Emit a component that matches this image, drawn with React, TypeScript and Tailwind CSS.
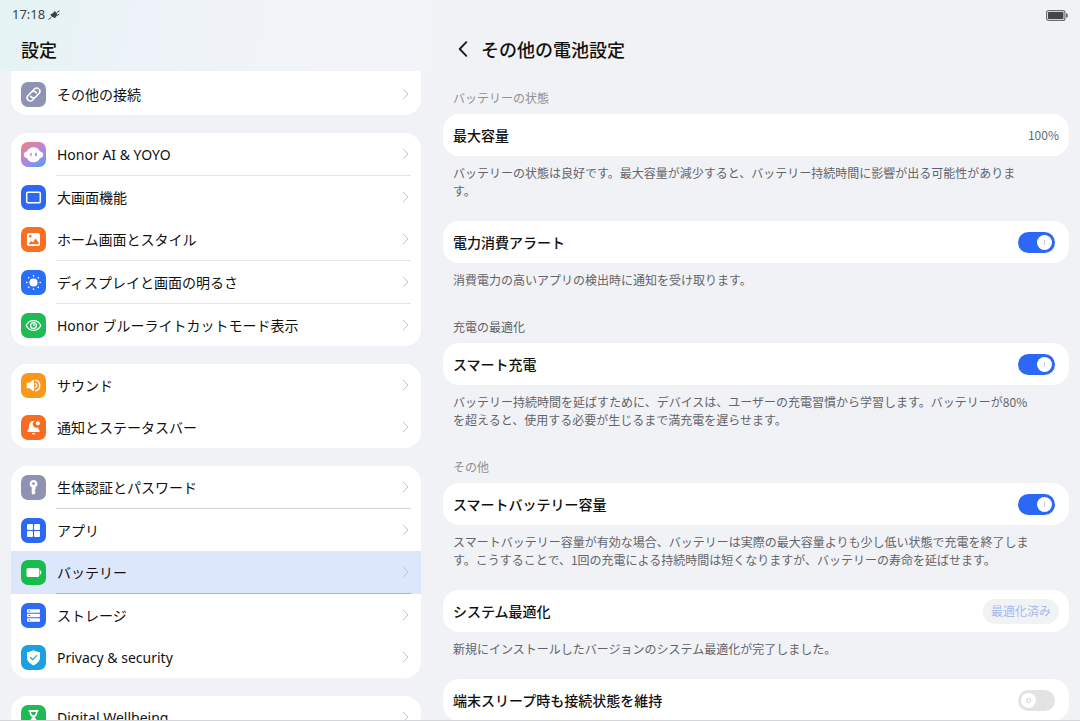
import { useId, useState } from "react";
import type { ReactNode } from "react";

const JP = "font-['Noto_Sans_CJK_JP','Liberation_Sans',sans-serif]";
const LATIN = "font-['Noto_Sans','Noto_Sans_CJK_JP',sans-serif]";

type IconName =
  | "link" | "yoyo" | "screen" | "picture" | "sun" | "eye" | "sound"
  | "bell" | "key" | "apps" | "battery" | "storage" | "shield" | "hourglass";

const glyphs: Record<IconName, ReactNode> = {
  link: (
    <g transform="rotate(-45 12.5 12.5)" fill="none" stroke="#fff" strokeWidth="1.5" strokeLinecap="round">
      <path d="M11.400 15.700H8a3.200 3.200 0 0 1 0-6.400h4.800a3.200 3.200 0 0 1 2.900 4.200" />
      <path d="M13.600 9.300H17a3.200 3.200 0 0 1 0 6.400h-4.800a3.200 3.200 0 0 1-2.900-4.200" />
    </g>
  ),
  yoyo: (
    <g>
      <path d="M12.5 5.3c3.2 0 5.5 1.7 6.4 4.3 2 .2 3.3 1.2 3.3 3.1s-1.300 3-3.200 3.200c-1 2.700-3.300 4.300-6.500 4.300s-5.500-1.600-6.500-4.300c-1.900-.2-3.200-1.300-3.200-3.200s1.300-2.900 3.300-3.100c.9-2.600 3.200-4.300 6.400-4.300z" fill="#fff" />
      <rect x="9.200" y="10.800" width="1.600" height="3.600" rx=".8" fill="#e58bb5" />
      <rect x="14.200" y="10.800" width="1.600" height="3.600" rx=".8" fill="#8f8be8" />
    </g>
  ),
  screen: <rect x="5.700" y="7.200" width="13.600" height="10.600" rx="1.200" fill="none" stroke="#fff" strokeWidth="1.500" />,
  picture: (
    <g>
      <rect x="6" y="6" width="13" height="13" rx="1.800" fill="#fff" />
      <circle cx="9.300" cy="9.300" r="1.300" fill="#f56f24" />
      <path d="M7.300 17.300l2.900-3.400 1.500 1.500 3-3.800 3 4.200v1.500z" fill="#f56f24" />
    </g>
  ),
  sun: (
    <g fill="#fff" stroke="#fff" strokeWidth="1.600" strokeLinecap="round">
      <circle cx="12.500" cy="12.500" r="3.300" />
      <path d="M12.500 5.700v.2M12.500 19.100v.2M5.700 12.500h.2M19.100 12.500h.2M7.700 7.700l.1.1M17.200 17.200l.1.1M7.700 17.300l.1-.1M17.200 7.800l.1-.1" />
    </g>
  ),
  eye: (
    <g fill="none" stroke="#fff" strokeWidth="1.300">
      <path d="M5.200 12.500c1.500-3.100 4.200-4.800 7.300-4.800s5.800 1.700 7.300 4.800c-1.500 3.100-4.200 4.800-7.300 4.800s-5.800-1.700-7.300-4.800z" />
      <circle cx="12.500" cy="12.500" r="2.900" />
      <circle cx="12.800" cy="12" r="1" fill="#fff" stroke="none" />
    </g>
  ),
  sound: (
    <g>
      <path d="M5.800 9.800h2.700l3.700-2.900c.5-.3.900-.1.900.5v10.200c0 .6-.4.8-.9.500l-3.700-2.900H6.600a.8.800 0 0 1-.8-.8z" fill="#fff" />
      <path d="M14.600 10.600a2.200 2.200 0 0 1 0 3.800M14.600 7.100a5.600 5.600 0 0 1 0 10.800" fill="none" stroke="#fff" strokeWidth="1.400" strokeLinecap="round" />
    </g>
  ),
  bell: (
    <g fill="#fff">
      <path d="M13.600 6a4.800 4.800 0 0 0-5.700 4.700v2.800l-1.600 2.200c-.4.600-.1 1.200.6 1.200h11.200c.7 0 1-.6.600-1.200l-1.600-2.200v-1.300a3.400 3.400 0 0 1-3.500-6.200z" />
      <circle cx="16.900" cy="8.300" r="2" />
      <path d="M10.800 17.900h3.400a1.700 1.500 0 0 1-3.400 0z" />
    </g>
  ),
  key: (
    <g>
      <path d="M12.500 5a3.900 3.900 0 0 0-1.800 7.300v6.200l1.400 1.300 2.300-1.500v-1.200l-.9-1 .9-1v-2.800A3.900 3.900 0 0 0 12.500 5z" fill="#fff" />
      <circle cx="12.500" cy="8.600" r="1.300" fill="#8f93b3" />
    </g>
  ),
  apps: (
    <g fill="#fff">
      <rect x="6" y="6" width="6" height="6" rx="1" />
      <rect x="13" y="6" width="6" height="6" rx="1" />
      <rect x="6" y="13" width="6" height="6" rx="1" />
      <rect x="13" y="13" width="6" height="6" rx="1" />
    </g>
  ),
  battery: (
    <g fill="#fff">
      <rect x="5.500" y="8" width="12.800" height="9" rx="1.600" />
      <rect x="19" y="10.600" width="1.200" height="3.800" rx=".6" />
    </g>
  ),
  storage: (
    <g>
      <g fill="#fff">
        <rect x="6" y="6.200" width="13" height="3.600" rx=".8" />
        <rect x="6" y="10.700" width="13" height="3.600" rx=".8" />
        <rect x="6" y="15.200" width="13" height="3.600" rx=".8" />
      </g>
      <path d="M7.600 8h1.600M7.600 12.500h1.600M7.600 17h1.600" stroke="#2f6bf2" strokeWidth="1" />
    </g>
  ),
  shield: (
    <g>
      <path d="M12.500 5c2 1.400 4 2 6.500 2.100v5.300c0 3.500-2.500 6-6.500 7.900-4-1.900-6.500-4.400-6.500-7.900V7.100C8.500 7 10.500 6.400 12.500 5z" fill="#fff" />
      <path d="M9.500 12.500l2.300 2.200 3.900-4" fill="none" stroke="#1ba1e2" strokeWidth="1.200" strokeLinecap="round" strokeLinejoin="round" />
    </g>
  ),
  hourglass: (
    <g fill="#fff">
      <path d="M7.500 5h10v1.500h-1c0 3-1.200 4.700-3 6 1.800 1.300 3 3 3 6h1V20h-10v-1.500h1c0-3 1.200-4.700 3-6-1.800-1.300-3-3-3-6h-1z" />
      <path d="M10 7h5c-.2 1.500-.8 2.500-1.500 3h-2c-.7-.5-1.300-1.500-1.500-3z" fill="#1fb955" />
    </g>
  ),
};

function AppIcon({ name, tile }: { name: IconName; tile: string }) {
  return (
    <span className={`size-[25px] shrink-0 overflow-hidden rounded-[7px] ${tile}`}>
      <svg viewBox="0 0 25 25" className="size-full" aria-hidden="true">{glyphs[name]}</svg>
    </span>
  );
}

type Item = { label: string; icon: IconName; tile: string; divider?: string };

const SOFT = "bg-[#e4e5e8]";

const groups: Item[][] = [
  [{ label: "その他の接続", icon: "link", tile: "bg-[#8f93b3]" }],
  [
    { label: "Honor AI & YOYO", icon: "yoyo", tile: "bg-linear-150 from-[#ef7f78] via-[#b884dc] to-[#2f9bfb]", divider: SOFT },
    { label: "大画面機能", icon: "screen", tile: "bg-[#2a68f5]" },
    { label: "ホーム画面とスタイル", icon: "picture", tile: "bg-[#f56f24]", divider: SOFT },
    { label: "ディスプレイと画面の明るさ", icon: "sun", tile: "bg-[#2a6ff8]", divider: SOFT },
    { label: "Honor ブルーライトカットモード表示", icon: "eye", tile: "bg-[#1fbb55]" },
  ],
  [
    { label: "サウンド", icon: "sound", tile: "bg-[#fa981e]" },
    { label: "通知とステータスバー", icon: "bell", tile: "bg-[#f56c22]" },
  ],
  [
    { label: "生体認証とパスワード", icon: "key", tile: "bg-[#8f93b3]", divider: "bg-[#cfd0d3]" },
    { label: "アプリ", icon: "apps", tile: "bg-[#2a68f5]" },
    { label: "バッテリー", icon: "battery", tile: "bg-[#16bd4b]", divider: "bg-[#aab6d2]" },
    { label: "ストレージ", icon: "storage", tile: "bg-[#2f6bf2]" },
    { label: "Privacy & security", icon: "shield", tile: "bg-[#1ba1e2]" },
  ],
  [{ label: "Digital Wellbeing", icon: "hourglass", tile: "bg-[#1fb955]" }],
];

function NavRow({ item, selected, onSelect }: { item: Item; selected: boolean; onSelect: () => void }) {
  return (
    <li className={selected ? "bg-[#dde7fc]" : ""}>
      <button
        type="button"
        onClick={onSelect}
        aria-current={selected ? "page" : undefined}
        className="flex h-[42px] w-full items-center gap-[11px] pr-3 pl-[10px] text-left"
      >
        <AppIcon name={item.icon} tile={item.tile} />
        <span className={`flex-1 truncate pt-[2px] text-sm text-[#111] ${LATIN}`}>{item.label}</span>
        <svg viewBox="0 0 7 12" className="h-3 w-[7px]" fill="none" stroke="#c3c4c8" aria-hidden="true">
          <path d="M1 .8L6 6l-5 5.200" />
        </svg>
      </button>
      {item.divider && <div className={`mr-[10px] ml-[45px] h-px ${item.divider}`} />}
    </li>
  );
}

function Card({ children }: { children: ReactNode }) {
  return <div className="flex h-[42px] items-center justify-between rounded-2xl bg-white px-[10px]">{children}</div>;
}

function Label({ children }: { children: ReactNode }) {
  return <span className="text-sm font-medium text-[#111]">{children}</span>;
}

function Note({ lines }: { lines: string[] }) {
  return (
    <p className="px-[10px] pt-2 text-xs leading-[18px] text-[#62646a]">
      {lines.map((line) => (
        <span key={line} className="block">{line}</span>
      ))}
    </p>
  );
}

function Heading({ children, tone = "text-[#8e9096]" }: { children: ReactNode; tone?: string }) {
  return <h2 className={`px-[10px] pb-[7px] text-xs leading-[18px] ${tone}`}>{children}</h2>;
}

function SwitchCard({ label, initial }: { label: string; initial: boolean }) {
  const id = useId();
  const [on, setOn] = useState(initial);
  return (
    <Card>
      <label htmlFor={id} className="text-sm font-medium text-[#111]">{label}</label>
      <span className="relative mr-1 flex">
        <input
          id={id}
          type="checkbox"
          role="switch"
          checked={on}
          onChange={() => setOn(!on)}
          className="h-[21px] w-[37px] appearance-none rounded-full bg-[#e3e3e4] checked:bg-[#2a68f5]"
        />
        <span className={`pointer-events-none absolute top-[3px] flex size-[15px] items-center justify-center rounded-full bg-white ${on ? "right-[3px]" : "left-[3px]"}`}>
          <span className={on ? "h-[5px] w-px bg-[#c9cad6]" : "size-[5px] rounded-full border border-[#cfcfd1]"} />
        </span>
      </span>
    </Card>
  );
}

export default function App() {
  const [selected, setSelected] = useState("バッテリー");
  return (
    <div className={`flex h-screen overflow-hidden border-b border-[#d5d6da] bg-[#f1f2f6] ${JP}`}>
      <aside className="flex w-2/5 flex-col">
        <header className="h-[71px] shrink-0 bg-linear-100 from-[#e4f3f4] via-[#eef3f9] via-35% to-[#f3f4f8]">
          <div className="flex h-[30px] items-center gap-[3px] pl-3 text-[#3c4145]">
            <time className="font-['Noto_Sans',sans-serif] text-[13px]">17:18</time>
            <svg viewBox="0 0 12 10" className="h-[10px] w-3" fill="currentColor" aria-hidden="true">
              <path d="M2.300 4.600l2.600-1.400L6.700.9l1.500 1.500c1.200.7 1.300 2.400.4 3.500L6.900 8.200 5.300 7.300l-1.600-.6z" />
              <path d="M.8 9.300l2-1.600M9.200 2.200l2-1.200M9.400 5.400l1.600-1.100" fill="none" stroke="currentColor" strokeLinecap="round" />
            </svg>
          </div>
          <h1 className="flex h-[38px] items-center pl-[21px] text-lg font-medium text-[#111]">設定</h1>
        </header>
        <nav aria-label="設定" className="flex-1 overflow-y-auto px-[11px] [scrollbar-width:none]">
          <div className="flex flex-col gap-[18px]">
            {groups.map((group, i) => (
              <ul key={group[0].label} className={`shrink-0 overflow-hidden bg-white ${i === 0 ? "rounded-b-2xl pt-[2px]" : "rounded-2xl"}`}>
                {group.map((item) => (
                  <NavRow key={item.label} item={item} selected={item.label === selected} onSelect={() => setSelected(item.label)} />
                ))}
              </ul>
            ))}
          </div>
        </nav>
      </aside>

      <main className="flex flex-1 flex-col">
        <div className="flex h-[30px] shrink-0 items-center justify-end pr-3">
          <svg viewBox="0 0 22 11" className="h-[11px] w-[22px]" role="img" aria-label="電池">
            <rect x=".6" y=".6" width="18.300" height="9.800" rx="2" fill="none" stroke="#6b6d70" strokeWidth="1.200" />
            <rect x="2" y="2" width="15.500" height="7" rx=".8" fill="#444648" />
            <path d="M20 3.600h.8a1 1 0 0 1 1 1v1.800a1 1 0 0 1-1 1H20z" fill="#6b6d70" />
          </svg>
        </div>
        <div className="flex h-[38px] shrink-0 items-center gap-[11px] pl-6">
          <button type="button" aria-label="戻る" className="flex w-[14px] justify-center">
            <svg viewBox="0 0 10 16" className="h-4 w-[10px]" fill="none" stroke="#1b1c1e" strokeWidth="1.900" strokeLinecap="round" strokeLinejoin="round">
              <path d="M8.300 1.200L1.700 8l6.600 6.800" />
            </svg>
          </button>
          <h1 className="text-lg font-medium text-[#111]">その他の電池設定</h1>
        </div>
        <div className="flex flex-1 flex-col gap-[29px] overflow-y-auto px-[11px] pt-[21px] [scrollbar-width:none]">
          <section className="flex flex-col gap-[21px]">
            <div>
              <Heading>バッテリーの状態</Heading>
              <Card>
                <Label>最大容量</Label>
                <span className="text-xs text-[#65676c]">100%</span>
              </Card>
              <Note lines={["バッテリーの状態は良好です。最大容量が減少すると、バッテリー持続時間に影響が出る可能性がありま", "す。"]} />
            </div>
            <div>
              <SwitchCard label="電力消費アラート" initial />
              <Note lines={["消費電力の高いアプリの検出時に通知を受け取ります。"]} />
            </div>
          </section>
          <section>
            <Heading tone="text-[#5f6166]">充電の最適化</Heading>
            <SwitchCard label="スマート充電" initial />
            <Note lines={["バッテリー持続時間を延ばすために、デバイスは、ユーザーの充電習慣から学習します。バッテリーが80%", "を超えると、使用する必要が生じるまで満充電を遅らせます。"]} />
          </section>
          <section className="flex flex-col gap-[21px]">
            <div>
              <Heading>その他</Heading>
              <SwitchCard label="スマートバッテリー容量" initial />
              <Note lines={["スマートバッテリー容量が有効な場合、バッテリーは実際の最大容量よりも少し低い状態で充電を終了しま", "す。こうすることで、1回の充電による持続時間は短くなりますが、バッテリーの寿命を延ばせます。"]} />
            </div>
            <div>
              <Card>
                <Label>システム最適化</Label>
                <button type="button" disabled className="h-[25px] rounded-full bg-[#f1f2f4] px-2 text-xs text-[#a6b9ec]">最適化済み</button>
              </Card>
              <Note lines={["新規にインストールしたバージョンのシステム最適化が完了しました。"]} />
            </div>
            <SwitchCard label="端末スリープ時も接続状態を維持" initial={false} />
          </section>
        </div>
      </main>
    </div>
  );
}
